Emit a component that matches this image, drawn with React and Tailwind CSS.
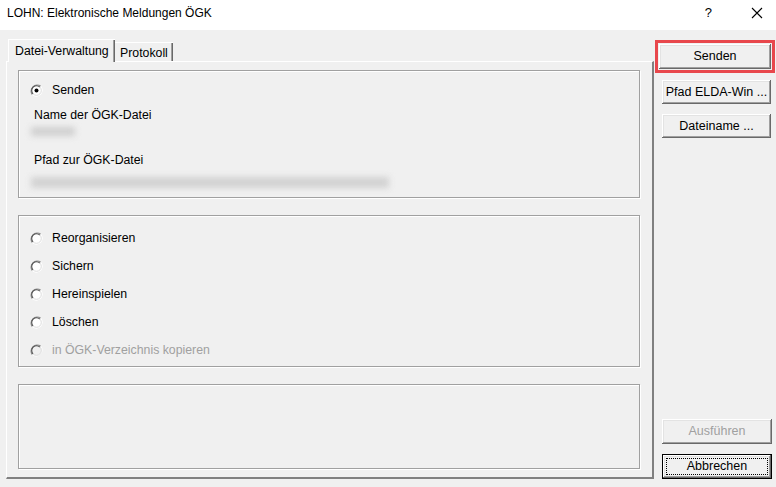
import React from "react";

const FONT = { fontFamily: '"Liberation Sans", Arial, sans-serif' };

const Radio = ({ checked = false, disabled = false }) => (
  <svg width="13" height="13" viewBox="0 0 13 13" className="shrink-0">
    <circle cx="6.5" cy="6.5" r="6" fill={disabled ? "#f0f0f0" : "#ffffff"} />
    <path d="M2.3 10.7 A6 6 0 0 1 10.7 2.3" fill="none" stroke="#8c8c8c" strokeWidth="1.2" />
    <path d="M3.1 9.9 A4.8 4.8 0 0 1 9.9 3.1" fill="none" stroke="#505050" strokeWidth="1.1" />
    <path d="M10.7 2.3 A6 6 0 0 1 2.3 10.7" fill="none" stroke="#ffffff" strokeWidth="1" />
    <path d="M9.9 3.1 A4.8 4.8 0 0 1 3.1 9.9" fill="none" stroke="#dcdcdc" strokeWidth="1" />
    {checked && <circle cx="6.5" cy="6.5" r="2" fill="#000" />}
  </svg>
);

const GroupBox = ({ className = "", children }) => (
  <div
    className={`border border-[#a0a0a0] shadow-[inset_1px_1px_0_#fff,1px_1px_0_#fff] ${className}`}
  >
    {children}
  </div>
);

const Button = ({ children, disabled = false, isDefault = false, className = "" }) => {
  if (isDefault) {
    return (
      <div className={`border border-[#000] ${className}`}>
        <div className="h-full bg-[#f0f0f0] shadow-[inset_-1px_-1px_0_#696969,inset_1px_1px_0_#fff,inset_-2px_-2px_0_#a0a0a0,inset_2px_2px_0_#e3e3e3] p-[3px]">
          <div className="h-full border border-dotted border-black flex items-center justify-center text-[12.5px] text-black">
            {children}
          </div>
        </div>
      </div>
    );
  }
  return (
    <div
      className={`bg-[#f0f0f0] shadow-[inset_-1px_-1px_0_#696969,inset_1px_1px_0_#fff,inset_-2px_-2px_0_#a0a0a0,inset_2px_2px_0_#e3e3e3] flex items-center justify-center text-[12.5px] ${
        disabled ? "text-[#a0a0a0]" : "text-black"
      } ${className}`}
    >
      {children}
    </div>
  );
};

const options = [
  { label: "Reorganisieren" },
  { label: "Sichern" },
  { label: "Hereinspielen" },
  { label: "Löschen" },
  { label: "in ÖGK-Verzeichnis kopieren", disabled: true },
];

export default function App() {
  return (
    <div className="w-[776px] h-[487px] overflow-hidden bg-[#f0f0f0] text-black" style={FONT}>
      {/* title bar */}
      <div className="h-[30px] bg-white flex items-start pt-[6px] pl-[7px]">
        <span className="text-[12px] leading-[14px]">LOHN: Elektronische Meldungen ÖGK</span>
        <span className="ml-auto mr-[39px] text-[13px] leading-[14px]">?</span>
        <svg width="12" height="12" viewBox="0 0 12 12" className="mr-[13px] mt-[1px]">
          <path d="M1 1 L11 11 M11 1 L1 11" stroke="#000" strokeWidth="1.1" />
        </svg>
      </div>

      <div className="flex h-[457px]">
        {/* left: tabs and panel */}
        <div className="pl-[6px] pt-[9px] flex flex-col">
          <div className="h-[22px] flex items-end pl-[2px] relative z-10">
            <div className="h-[23px] w-[107px] -mb-[1px] bg-[#f0f0f0] border-t border-l border-white shadow-[inset_-1px_0_0_#696969,inset_-2px_0_0_#a0a0a0] pl-[6px] pt-[3px] text-[12.3px] leading-[16px] whitespace-nowrap">
              Datei-Verwaltung
            </div>
            <div className="h-[19px] w-[58px] bg-[#f0f0f0] border-t border-white shadow-[inset_-1px_0_0_#696969,inset_-2px_0_0_#a0a0a0] pl-[5px] pt-[2px] text-[12.3px] leading-[16px] whitespace-nowrap">
              Protokoll
            </div>
          </div>
          <div className="w-[648px] h-[418px] border-l border-t border-white border-r-2 border-b-2 border-r-[#808080] border-b-[#808080] pl-[11px] pt-[8px] flex flex-col">
            <GroupBox className="w-[622px] h-[128px] pl-[11px] pt-[9px] flex flex-col text-[12.3px]">
              <div className="h-[20px] flex items-center gap-[9px]">
                <Radio checked />
                <span>Senden</span>
              </div>
              <div className="mt-[7px] h-[16px] leading-[16px] pl-[4px]">Name der ÖGK-Datei</div>
              <div className="h-[16px] flex items-center pl-[1px]">
                <div className="w-[44px] h-[9px] bg-[#cfcfcf] blur-[3px]" />
              </div>
              <div className="mt-[13px] h-[16px] leading-[16px] pl-[4px]">Pfad zur ÖGK-Datei</div>
              <div className="mt-[6px] h-[16px] flex items-center pl-[1px]">
                <div className="w-[358px] h-[11px] bg-[#d2d2d2] blur-[3px]" />
              </div>
            </GroupBox>

            <GroupBox className="mt-[17px] w-[622px] h-[152px] pt-[8px] pl-[11px] flex flex-col text-[12.3px]">
              {options.map((o) => (
                <div key={o.label} className="h-[28px] flex items-center gap-[9px]">
                  <Radio disabled={o.disabled} />
                  <span className={o.disabled ? "text-[#a0a0a0]" : "text-black"}>{o.label}</span>
                </div>
              ))}
            </GroupBox>

            <GroupBox className="mt-[17px] w-[622px] h-[85px]" />
          </div>
        </div>

        {/* right: buttons */}
        <div className="flex-1 flex flex-col pl-[1px] pt-[10px] pb-[8px]">
          <div className="w-[120px] h-[33px] border-[3px] border-[#e8474c] p-[1px]">
            <Button className="h-full">Senden</Button>
          </div>
          <Button className="mt-[7px] ml-[7px] w-[109px] h-[24px]">Pfad ELDA-Win ...</Button>
          <Button className="mt-[10px] ml-[7px] w-[109px] h-[24px]">Dateiname ...</Button>

          <Button disabled className="mt-auto ml-[7px] w-[110px] h-[25px]">
            Ausführen
          </Button>
          <Button isDefault className="mt-[10px] ml-[7px] w-[110px] h-[25px]">
            Abbrechen
          </Button>
        </div>
      </div>
    </div>
  );
}
